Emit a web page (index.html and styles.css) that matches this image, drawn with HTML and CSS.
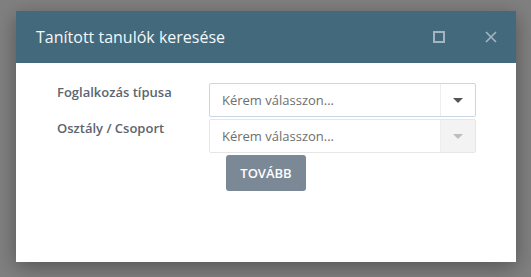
FILE: index.html
```html
<!DOCTYPE html>
<html lang="hu">
<head>
  <meta charset="UTF-8" />
  <title>Tanított tanulók keresése</title>
  <link rel="stylesheet" href="styles.css">
</head>
<body>
  <div class="dialog">
    <div class="dialog-header">
      <div class="dialog-title">Tanított tanulók keresése</div>
      <div class="dialog-actions">
        <span class="icon-max"></span>
        <svg class="icon-close" width="12" height="12" viewBox="0 0 12 12">
          <path d="M1 1 L11 11 M11 1 L1 11" stroke="currentColor" stroke-width="1.6" fill="none"/>
        </svg>
      </div>
    </div>

    <div class="dialog-body">
      <div class="form">
        <label class="form-label">Foglalkozás típusa</label>
        <div class="select">
          <span class="select-value">Kérem válasszon...</span>
          <span class="select-arrow"><span class="caret"></span></span>
        </div>

        <label class="form-label">Osztály / Csoport</label>
        <div class="select disabled">
          <span class="select-value">Kérem válasszon...</span>
          <span class="select-arrow"><span class="caret"></span></span>
        </div>

        <div></div>
        <div class="actions">
          <button class="btn">TOVÁBB</button>
        </div>
      </div>
    </div>
  </div>
</body>
</html>
```

FILE: styles.css
```css
body {
  margin: 0;
  padding: 11px 0 0 16px;
  background: #808080;
  font-family: 'Open Sans', sans-serif;
  height: 277px;
  box-sizing: border-box;
  overflow: hidden;
}

.dialog {
  width: 500px;
  height: 251px;
  background: #fff;
  box-shadow: 0 5px 20px rgba(0, 0, 0, 0.35);
}

.dialog-header {
  height: 52px;
  background: #426a7c;
  display: flex;
  align-items: center;
  justify-content: space-between;
  padding: 0 20px;
}

.dialog-title {
  color: #f4f7f9;
  font-size: 16px;
  margin-top: -1px;
}

.dialog-actions {
  display: flex;
  align-items: center;
  gap: 40px;
  color: #a3b6c0;
  margin-right: -1px;
}

.icon-max {
  width: 8px;
  height: 8px;
  border: 2px solid currentColor;
}

.icon-close {
  display: block;
}

.dialog-body {
  padding: 20px 0 0 41px;
}

.form {
  display: grid;
  grid-template-columns: 152px 267px;
  row-gap: 2px;
}

.form-label {
  font-size: 13px;
  font-weight: 600;
  color: #5b6570;
  line-height: 18px;
}

.select {
  height: 34px;
  box-sizing: border-box;
  border: 1px solid #c9d6e4;
  border-radius: 2px;
  display: flex;
  align-items: center;
}

.select.disabled {
  border-color: #e6e6e6;
}

.select-value {
  flex: 1;
  padding-left: 12px;
  font-size: 13px;
  color: #6e6e6e;
}

.select-arrow {
  width: 34px;
  align-self: stretch;
  border-left: 1px solid #eeeeee;
  display: flex;
  align-items: center;
  justify-content: center;
}

.select.disabled .select-arrow {
  background: #f3f3f3;
}

.caret {
  width: 0;
  height: 0;
  border-left: 5px solid transparent;
  border-right: 5px solid transparent;
  border-top: 5px solid #555;
}

.select.disabled .caret {
  border-top-color: #bdbdbd;
}

.actions {
  padding-left: 17px;
}

.btn {
  width: 80px;
  height: 36px;
  border: none;
  border-radius: 3px;
  background: #7b8896;
  color: #fff;
  font-family: 'Open Sans', sans-serif;
  font-size: 13px;
  font-weight: 600;
  cursor: pointer;
}
```
